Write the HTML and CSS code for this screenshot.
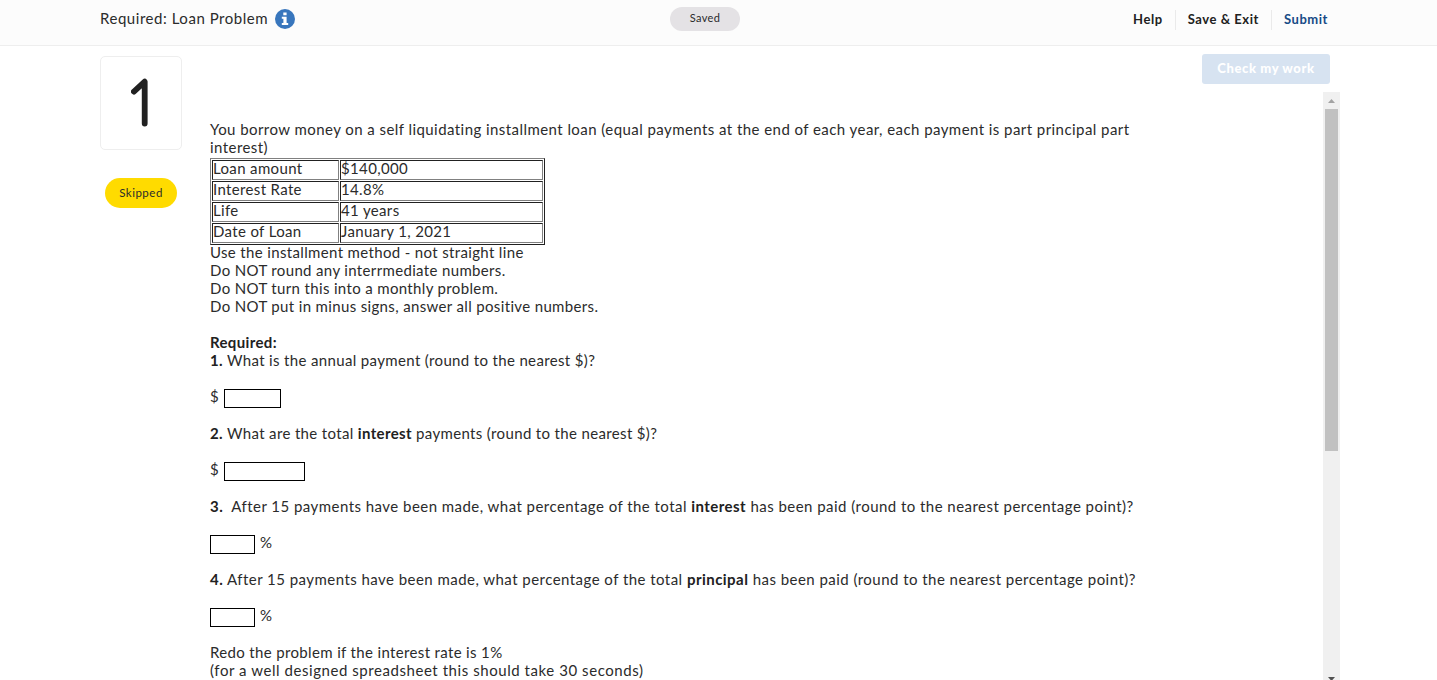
FILE: index.html
```html
<!DOCTYPE html>
<html lang="en">
<head>
  <meta charset="UTF-8">
  <meta name="viewport" content="width=device-width, initial-scale=1.0">
  <title>Required: Loan Problem</title>
  <link rel="stylesheet" href="styles.css">
</head>
<body>
  <header class="header">
    <div class="title">
      <h1>Required: Loan Problem</h1>
      <svg class="info" viewBox="0 0 20 20">
        <circle cx="10" cy="10" r="10" fill="#3876bd"/>
        <path d="M8.3 3.4h3.3v2.8H8.3zM6.8 7.7h4.8v6.2h1.6v2H6.8v-2h1.6V9.7H6.8z" fill="#fff"/>
      </svg>
    </div>
    <div class="saved">Saved</div>
    <nav class="actions">
      <a class="help">Help</a>
      <a class="exit">Save &amp; Exit</a>
      <a class="submit">Submit</a>
    </nav>
  </header>

  <main class="main">
    <aside class="side">
      <div class="number">
        <svg viewBox="0 0 20 52" width="20" height="52">
          <path d="M2.9 14.6L13.7 4.6V46.5" fill="none" stroke="#212121" stroke-width="5.8" stroke-linecap="round" stroke-linejoin="round"/>
        </svg>
      </div>
      <div class="status">Skipped</div>
    </aside>

    <section class="question">
      <div class="toolbar">
        <button class="check">Check my work</button>
      </div>
      <div class="viewer">
        <div class="content">
          <p class="intro">You borrow money on a self liquidating installment loan (equal payments at the end of each year, each payment is part principal part<br>interest)</p>
          <table class="loan">
            <tr><td>Loan amount</td><td>$140,000</td></tr>
            <tr><td>Interest Rate</td><td>14.8%</td></tr>
            <tr><td>Life</td><td>41 years</td></tr>
            <tr><td>Date of Loan</td><td>January 1, 2021</td></tr>
          </table>
          <p>Use the installment method - not straight line</p>
          <p>Do NOT round any interrmediate numbers.</p>
          <p>Do NOT turn this into a monthly problem.</p>
          <p class="gap">Do NOT put in minus signs, answer all positive numbers.</p>

          <p><b>Required:</b></p>
          <p class="gap"><b>1.</b> What is the annual payment (round to the nearest $)?</p>
          <div class="answer"><span>$</span><input class="medium" type="text"></div>

          <p class="gap"><b>2.</b> What are the total <b>interest</b> payments (round to the nearest $)?</p>
          <div class="answer"><span>$</span><input class="large" type="text"></div>

          <p class="gap long"><b>3.</b>&nbsp; After 15 payments have been made, what percentage of the total <b>interest</b> has been paid (round to the nearest percentage point)?</p>
          <div class="answer"><input class="small" type="text"><span>%</span></div>

          <p class="gap long"><b>4.</b> After 15 payments have been made, what percentage of the total <b>principal</b> has been paid (round to the nearest percentage point)?</p>
          <div class="answer"><input class="small" type="text"><span>%</span></div>

          <p>Redo the problem if the interest rate is 1%</p>
          <p class="note">(for a well designed spreadsheet this should take 30 seconds)</p>
        </div>
        <div class="scrollbar">
          <svg class="arrow" viewBox="0 0 17 17"><path d="M5 11h7L8.5 7z" fill="#a3a3a3"/></svg>
          <div class="thumb"></div>
          <svg class="arrow" viewBox="0 0 17 17"><path d="M5 5h7L8.5 9z" fill="#505050"/></svg>
        </div>
      </div>
    </section>
  </main>
</body>
</html>
```

FILE: styles.css
```css
* {
  box-sizing: border-box;
}

body {
  margin: 0;
  height: 680px;
  overflow: hidden;
  background: #fff;
  color: #2b2b2b;
  font-family: Lato, sans-serif;
  font-size: 15px;
  line-height: 18px;
  letter-spacing: 0.35px;
}

b {
  color: #212121;
}

.header {
  display: grid;
  grid-template-columns: 570px 70px 1fr;
  height: 46px;
  padding: 7px 99px 0 100px;
  background: #fcfcfc;
  border-bottom: 1px solid #eee;
}

.title {
  display: flex;
  gap: 7px;
  height: 24px;
  align-items: center;
}

h1 {
  width: 168px;
  margin: 0 0 2px;
  font-size: 15px;
  font-weight: normal;
  letter-spacing: 0.54px;
  white-space: nowrap;
}

.info {
  width: 20px;
  height: 20px;
}

.saved {
  height: 24px;
  border-radius: 12px;
  background: #e4e2e5;
  text-align: center;
  font-size: 11px;
  line-height: 22px;
  letter-spacing: 0.4px;
}

.actions {
  display: flex;
  justify-content: flex-end;
  padding-top: 3px;
  color: #212121;
  font-size: 13px;
  font-weight: bold;
  letter-spacing: 0.55px;
}

.actions a {
  padding: 0 12px;
  height: 20px;
  line-height: 19px;
}

.actions .submit {
  padding-right: 9px;
  color: #174a86;
}

.actions a + a {
  border-left: 1px solid #eaeaea;
}

.actions .submit {
  padding-left: 12px;
  padding-right: 10px;
}

.main {
  display: flex;
  height: 634px;
  padding-left: 100px;
}

.side {
  display: flex;
  flex-direction: column;
  align-items: center;
  width: 82px;
  padding-top: 10px;
}

.number {
  display: flex;
  align-items: center;
  justify-content: center;
  width: 82px;
  height: 94px;
  border: 1px solid #eee;
  border-radius: 5px;
}

.status {
  width: 72px;
  height: 30px;
  margin-top: 28px;
  border-radius: 15px;
  background: #ffdb00;
  font-size: 11.5px;
  line-height: 30px;
  letter-spacing: 0.5px;
  text-align: center;
}

.question {
  display: flex;
  flex-direction: column;
  width: 1130px;
  margin-left: 28px;
}

.toolbar {
  display: flex;
  flex-shrink: 0;
  justify-content: flex-end;
  height: 46px;
  padding: 8px 10px 0 0;
}

.check {
  width: 128px;
  height: 30px;
  padding: 0 0 2px;
  border: none;
  border-radius: 3px;
  background: #d7e3f1;
  color: #fff;
  font: 900 13px Lato, sans-serif;
  letter-spacing: 0.6px;
}

.viewer {
  display: flex;
  flex: 1;
  justify-content: space-between;
}

.content {
  padding-top: 28px;
  white-space: nowrap;
}

p {
  margin: 0;
}

.gap,
.answer {
  margin-bottom: 18px;
}

.intro {
  letter-spacing: 0.44px;
}

.long {
  letter-spacing: 0.46px;
}

.note {
  letter-spacing: 0.56px;
}

.loan {
  width: 335px;
  margin: 2px 0 -2px;
  border: 1px solid;
  border-color: #808080 #212121 #212121 #808080;
  border-spacing: 1px;
}

.loan td {
  height: 20px;
  padding: 0 0 4px;
  border: 1px solid;
  border-color: #212121 #808080 #808080 #212121;
  line-height: 14px;
}

.loan td:first-child {
  width: 127px;
}

.answer {
  display: flex;
  gap: 5px;
  height: 19px;
}

input {
  height: 19px;
  margin: 2px 0 0;
  padding: 0;
  border: 1px solid #000;
  background: #fff;
}

.small {
  width: 45px;
}

.medium {
  width: 57px;
}

.large {
  width: 81px;
}

.scrollbar {
  display: flex;
  flex-direction: column;
  width: 17px;
  height: 597px;
  background: #f0f0f0;
}

.arrow {
  width: 17px;
  height: 17px;
}

.thumb {
  width: 13px;
  height: 342px;
  margin: 0 2px auto;
  background: #c1c1c1;
}
```
